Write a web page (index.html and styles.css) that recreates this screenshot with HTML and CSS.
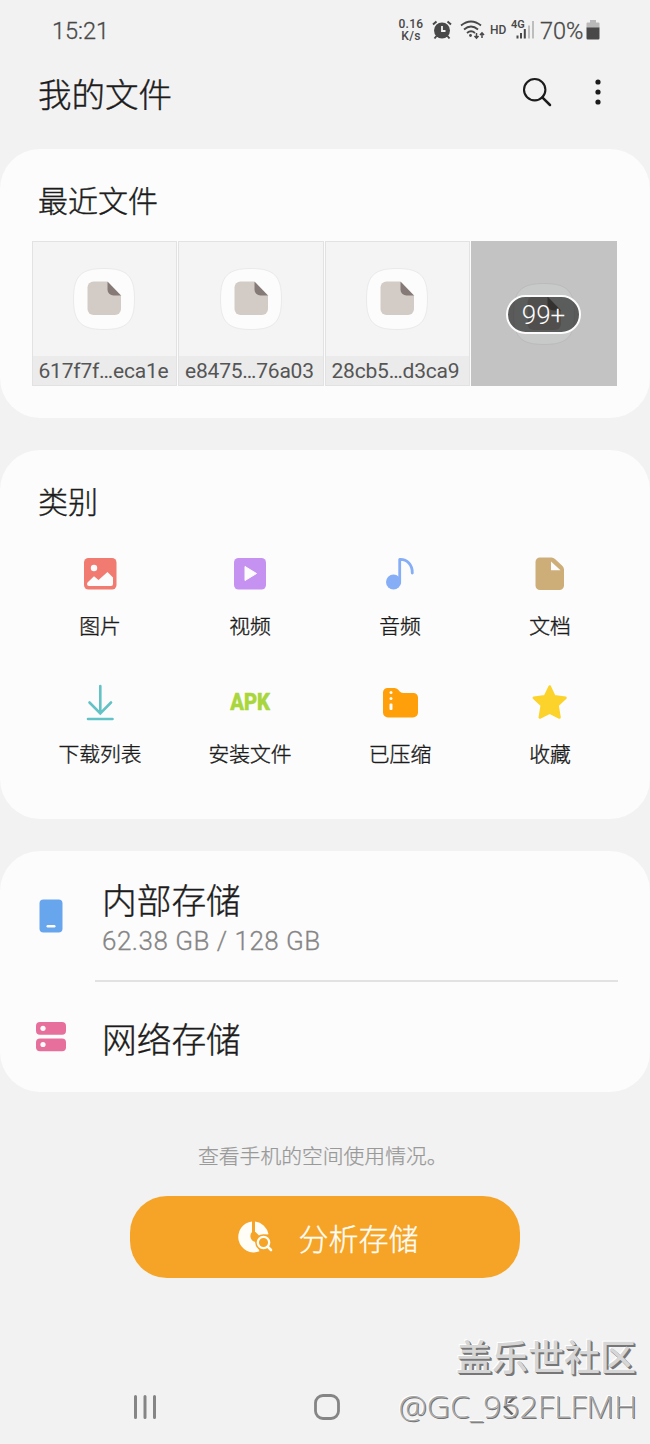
FILE: index.html
```html
<!DOCTYPE html>
<html lang="zh-CN">
<head>
<meta charset="utf-8">
<title>我的文件</title>
<link rel="stylesheet" href="styles.css">
</head>
<body>
<svg class="defs" width="0" height="0">
  <defs>
    <symbol id="sheet" viewBox="0 0 64 64">
      <path d="M21.500 14.500H35L49 28.500V42a6 6 0 0 1-6 6H21.500a6 6 0 0 1-6-6V20.500a6 6 0 0 1 6-6Z" fill="#d3ccc6"/>
      <path d="M35.500 14.500L49 28.500H41.500a6 6 0 0 1-6-6Z" fill="#857a76"/>
    </symbol>
    <symbol id="file" viewBox="0 0 64 64">
      <path d="M32 1.500C55 1.500 62.500 9 62.500 32S55 62.500 32 62.500 1.500 55 1.500 32 9 1.500 32 1.500Z" fill="#fcfcfc" stroke="#eaeaea"/>
      <use href="#sheet" width="64" height="64"/>
    </symbol>
  </defs>
</svg>
<div class="phone">
  <header class="status">
    <span class="clock">15:21</span>
    <div class="indicators">
      <span class="speed">0.16<br>K/s</span>
      <svg class="alarm" width="20" height="20" viewBox="0 0 20 20"><circle cx="10" cy="10.500" r="8" fill="#484848"/><path d="M1 4.500L4.500 1.500M19 4.500L15.500 1.500M4.500 16L2.500 18.500M15.500 16L17.500 18.500" stroke="#484848" stroke-width="2"/><path d="M10 6V11H13.500" fill="none" stroke="#f2f2f2" stroke-width="1.800"/></svg>
      <svg class="wifi" width="25" height="20" viewBox="0 0 25 20" fill="none" stroke="#484848" stroke-width="1.800"><path d="M1 5.500Q11 -2.500 21 5.500M4 9.500Q11 3.500 18 9.500M7 13Q11 9.500 15 13"/><circle cx="10.500" cy="15.500" r="1.400" fill="#484848" stroke="none"/><path d="M16.500 13V18M14.500 16L16.500 18.200 18.500 16M22 18V13M20 15L22 12.800 24 15" stroke-width="1.500"/></svg>
      <span class="hd">HD</span>
      <span class="cell"><svg width="22" height="20" viewBox="0 0 22 20"><path d="M5.500 15.500V18.500M9 13V18.500M12.800 9V18.500" stroke="#484848" stroke-width="2"/><path d="M17 5.500V18.500M21 1V18.500" stroke="#bdbdbd" stroke-width="2"/></svg><b>4G</b></span>
      <span class="percent">70%</span>
      <svg class="battery" width="14" height="20" viewBox="0 0 14 20"><path d="M4 0H10V2.500H12.500a1 1 0 0 1 1 1V8H.5V3.500a1 1 0 0 1 1-1H4Z" fill="#b9b9b9"/><path d="M.5 7.500H13.500V18.300a1.200 1.200 0 0 1-1.200 1.200H1.700A1.200 1.200 0 0 1 .5 18.300Z" fill="#484848"/></svg>
    </div>
  </header>
  <div class="titlebar">
    <h1>我的文件</h1>
    <div class="actions">
      <svg width="30" height="30" viewBox="0 0 30 30" fill="none" stroke="#1c1c1c" stroke-width="2.100"><circle cx="12.700" cy="12.700" r="10.700"/><path d="M20.300 20.300L28 28" stroke-width="2.500" stroke-linecap="round"/></svg>
      <svg width="6" height="26" viewBox="0 0 6 26" fill="#1c1c1c"><circle cx="3" cy="3" r="2.600"/><circle cx="3" cy="13" r="2.600"/><circle cx="3" cy="23" r="2.600"/></svg>
    </div>
  </div>

  <section class="card recent">
    <h2>最近文件</h2>
    <div class="thumbs">
      <div class="thumb"><svg width="64" height="64"><use href="#file"/></svg><span class="name">617f7f…eca1e</span></div>
      <div class="thumb"><svg width="64" height="64"><use href="#file"/></svg><span class="name">e8475…76a03</span></div>
      <div class="thumb"><svg width="64" height="64"><use href="#file"/></svg><span class="name">28cb5…d3ca9</span></div>
      <div class="thumb more"><svg width="64" height="64" viewBox="0 0 64 64"><path d="M32 1.500C55 1.500 62.500 9 62.500 32S55 62.500 32 62.500 1.500 55 1.500 32 9 1.500 32 1.500Z" fill="#c8c9c9" stroke="#bbb"/><path d="M21.500 14.500H35L49 28.500V42a6 6 0 0 1-6 6H21.500a6 6 0 0 1-6-6V20.500a6 6 0 0 1 6-6Z" fill="#a9a39f"/><path d="M35.500 14.500L49 28.500H41.500a6 6 0 0 1-6-6Z" fill="#504844"/></svg><span class="count">99+</span></div>
    </div>
  </section>

  <section class="card categories">
    <h2>类别</h2>
    <div class="grid">
      <div class="cat"><svg width="40" height="40" viewBox="0 0 40 40"><rect x="4" y="4" width="32.500" height="31.500" rx="4.500" fill="#f17b70"/><circle cx="14" cy="14" r="3.200" fill="#fcfcfc"/><path d="M7.500 28.500L14 22.200 18.500 26 27.500 18 33 23.500V30a2 2 0 0 1-2 2H9a2 2 0 0 1-2-2Z" fill="#fcfcfc"/></svg><span>图片</span></div>
      <div class="cat"><svg width="40" height="40" viewBox="0 0 40 40"><rect x="4" y="4" width="32" height="31.500" rx="4.500" fill="#c692f1"/><path d="M15 12.500V26.500L26.500 19.500Z" fill="#fcfcfc" stroke="#fcfcfc" stroke-linejoin="round"/></svg><span>视频</span></div>
      <div class="cat"><svg width="40" height="40" viewBox="0 0 40 40"><circle cx="13.500" cy="28" r="7.500" fill="#86aef6"/><path d="M19.700 29V5.500C27 5 32.500 11 32.300 19" fill="none" stroke="#86aef6" stroke-width="2.800" stroke-linecap="round" stroke-linejoin="round"/></svg><span>音频</span></div>
      <div class="cat"><svg width="40" height="40" viewBox="0 0 40 40"><path d="M10 3.500H21.500Q23.500 3.500 25 5L32.500 12Q34 13.500 34 15.500V31.500a4.500 4.500 0 0 1-4.500 4.500H10a4.500 4.500 0 0 1-4.500-4.500V8A4.500 4.500 0 0 1 10 3.500Z" fill="#ceae78"/><path d="M21 7.500V16.300H30.500Z" fill="#fcfcfc"/></svg><span>文档</span></div>
      <div class="cat"><svg width="40" height="40" viewBox="0 0 40 40" fill="none" stroke="#62c2c6" stroke-width="2.600" stroke-linecap="round"><path d="M20.300 4V31M9.500 20.500L20.300 31.500 31 20.500M8 37H32.500"/></svg><span>下载列表</span></div>
      <div class="cat"><b class="apk">APK</b><span>安装文件</span></div>
      <div class="cat"><svg width="40" height="40" viewBox="0 0 40 40"><path d="M7.500 6H14.500Q16.500 6 18 7.500L20 9.700Q21.500 11 23.500 11H33.500a4.500 4.500 0 0 1 4.500 4.500V30.500a5 5 0 0 1-5 5H8a5 5 0 0 1-5-5V10.500A4.500 4.500 0 0 1 7.500 6Z" fill="#ff9f0a"/><circle cx="11" cy="10.500" r="1.500" fill="#fcfcfc"/><circle cx="11" cy="16.500" r="1.500" fill="#fcfcfc"/><rect x="9.500" y="21.500" width="3" height="6.500" rx="1" fill="#fcfcfc"/></svg><span>已压缩</span></div>
      <div class="cat"><svg width="40" height="40" viewBox="0 0 40 40"><path d="M19.700 4.500L24.300 14.300 35.500 15.800 27.500 23.200 29.500 35.500 19.700 30.500 9.800 35.500 11.800 23.200 3.800 15.800 15 14.300Z" fill="#fbd32b" stroke="#fbd32b" stroke-width="2.600" stroke-linejoin="round"/></svg><span>收藏</span></div>
    </div>
  </section>

  <section class="card storage">
    <div class="row internal">
      <svg width="34" height="34" viewBox="0 0 34 34"><rect x="5.500" y=".5" width="23" height="33" rx="4" fill="#67a5ed"/><rect x="12.500" y="26" width="9" height="2.500" rx="1.200" fill="#fcfcfc"/></svg>
      <div class="detail"><h3>内部存储</h3><p>62.38 GB / 128 GB</p></div>
    </div>
    <div class="row network">
      <svg width="34" height="34" viewBox="0 0 34 34"><rect x="2" y="2" width="30" height="12.700" rx="4" fill="#e6709b"/><rect x="2" y="18.500" width="30" height="12.700" rx="4" fill="#e6709b"/><circle cx="9" cy="8.300" r="2.600" fill="#fcfcfc"/><circle cx="9" cy="24.500" r="2.600" fill="#fcfcfc"/></svg>
      <h3>网络存储</h3>
    </div>
  </section>

  <p class="hint">查看手机的空间使用情况。</p>
  <button class="analyze">
    <svg width="36" height="34" viewBox="0 0 36 34"><path d="M15 1.500A15.500 15.500 0 1 0 22.500 31.300L18.500 22A6 6 0 0 1 15 12Z" fill="#fffdf5"/><path d="M18 1.500A15.500 15.500 0 0 1 31.500 14.300L22 15.500 18 11.500Z" fill="#fffdf5"/><circle cx="26.500" cy="22.500" r="8.300" fill="#f5a427"/><circle cx="26.500" cy="22.500" r="5.700" fill="none" stroke="#fffdf5" stroke-width="2.300"/><path d="M30.700 26.700L34 30" stroke="#fffdf5" stroke-width="2.600" stroke-linecap="round"/></svg>
    <span>分析存储</span>
  </button>

  <nav class="navbar">
    <svg width="24" height="26" viewBox="0 0 24 26" stroke="#858585" stroke-width="3" stroke-linecap="round"><path d="M2.500 2.500V23.500M12 2.500V23.500M21.500 2.500V23.500"/></svg>
    <svg class="home" width="26" height="26" viewBox="0 0 26 26"><rect x="1.500" y="1.500" width="23" height="23" rx="7.500" fill="none" stroke="#858585" stroke-width="2.800"/></svg>
    <svg width="14" height="26" viewBox="0 0 14 26" fill="none" stroke="#666" stroke-width="2.600" stroke-linecap="round"><path d="M12 3L2 13 12 23"/></svg>
  </nav>
  <div class="watermark"><div class="brand">盖乐世社区</div><div class="user">@GC_952FLFMH</div></div>
</div>
</body>
</html>
```
FILE: styles.css
```css
* { box-sizing: border-box; }
body { margin: 0; background: #f2f2f2; color: #1c1c1c; font-family: "Noto Sans CJK SC", sans-serif; font-weight: 300; }
h1, h2, h3, p { margin: 0; font-weight: 300; }
h1, h2, h3, .cat span { -webkit-text-stroke: .4px #1c1c1c; }
svg { display: block; flex: none; }
.defs { position: absolute; }
.phone { position: relative; width: 650px; height: 1444px; overflow: hidden; display: flex; flex-direction: column; }

.status { height: 60px; padding: 0 50px 0 52px; display: flex; align-items: center; justify-content: space-between; font-family: Roboto, sans-serif; font-weight: 400; color: #484848; }
.clock { font-size: 23.5px; font-weight: 300; -webkit-text-stroke: .3px #484848; padding-top: 1px; }
.indicators { display: flex; align-items: center; }
.speed { width: 26px; font-size: 12px; line-height: 11.500px; letter-spacing: .3px; text-align: center; font-weight: 500; padding-top: 1px; }
.alarm { margin-left: 8px; }
.wifi { margin-left: 8px; }
.hd { margin-left: 5px; width: 18px; font-size: 12px; font-weight: 500; }
.cell { position: relative; margin-left: 4px; }
.cell b { position: absolute; left: -1px; top: -1px; font-size: 11px; line-height: 12px; font-weight: 600; }
.percent { margin-left: 6px; width: 44px; font-size: 23.500px; font-weight: 300; -webkit-text-stroke: .3px #484848; padding-top: 1px; }
.battery { margin-left: 2px; }

.titlebar { height: 89px; padding: 0 49px 0 38px; display: flex; align-items: flex-start; justify-content: space-between; }
h1 { font-size: 33.500px; line-height: 65px; }
.actions { display: flex; align-items: center; gap: 43px; height: 64px; }

.card { width: 650px; border-radius: 40px; background: #fcfcfc; flex: none; }
h2 { font-size: 30px; line-height: 44px; padding-left: 38px; }
.recent { height: 269px; padding-top: 28px; }
.thumbs { display: grid; grid-template-columns: repeat(4, 145.500px); gap: 1px; margin: 20px 0 0 31.500px; }
.thumb { height: 145px; background: #f4f4f4; border: 1px solid #e2e2e2; display: flex; flex-direction: column; align-items: center; justify-content: space-between; padding-top: 25px; }
.name { width: 100%; height: 29px; padding-left: 6px; background: #ebebeb; color: #555; font: 400 21px/31px Roboto, sans-serif; letter-spacing: -.2px; white-space: nowrap; }
.more { position: relative; background: #c3c3c3; border-color: #c3c3c3; padding-top: 40px; }
.count { position: absolute; left: 34px; top: 52.500px; width: 75px; height: 39px; border: 2px solid #fcfcfc; border-radius: 20px; background: rgba(40, 40, 40, .68); color: #fcfcfc; font: 300 26px/37px Roboto, sans-serif; text-align: center; }

.categories { height: 369px; margin-top: 32px; padding-top: 28px; }
.grid { display: grid; grid-template-columns: repeat(4, 150px); grid-auto-rows: 128px; margin: 32px 0 0 25px; }
.cat { display: flex; flex-direction: column; align-items: center; font-size: 20.800px; line-height: 30px; }
.cat span { margin-top: 16px; }
.apk { height: 40px; font: 800 23.500px/41px Roboto, sans-serif; color: #a8d63c; transform: scaleX(.86); -webkit-text-stroke: .6px #a8d63c; }

.storage { height: 241px; margin-top: 32px; padding: 0 32px 0 34px; }
.row { display: flex; align-items: center; gap: 34px; }
h3 { font-size: 34.700px; line-height: 46px; }
.internal { height: 130px; position: relative; }
.internal::after { content: ""; position: absolute; left: 61px; right: 0; bottom: -1px; height: 2px; background: #e2e2e2; }
.internal .detail { padding-top: 5px; }
.internal p { font: 300 26px/39px Roboto, sans-serif; letter-spacing: .5px; color: #858585; -webkit-text-stroke: .3px #858585; }
.network { height: 111px; }
.network h3 { padding-top: 2px; }

.hint { margin-top: 47px; height: 32px; padding-left: 198px; font-size: 20.800px; line-height: 33px; color: #999; white-space: nowrap; -webkit-text-stroke: .25px #999; }
.analyze { width: 390px; height: 82px; margin: 25px 0 0 130px; padding: 0 0 0 5px; border: 0; border-radius: 37px; background: #f5a427; color: #fffdf5; font: 300 30px/44px "Noto Sans CJK SC", sans-serif; -webkit-text-stroke: .35px #fffdf5; display: flex; align-items: center; justify-content: center; gap: 26px; flex: none; }

.navbar { display: flex; align-items: center; justify-content: space-between; width: 384px; margin: 116px 0 0 133px; }
.home { margin-right: 6px; }
.watermark { position: absolute; right: 14px; top: 1330px; color: #d6d6d6; text-align: right; white-space: nowrap; text-shadow: 1px 1px 0 #777, 2px 2px 0 #777, -1px -1px 0 #fff; }
.brand { font-size: 36px; line-height: 50px; font-weight: 500; }
.user { margin-right: -1px; font: 300 32px/51px "Open Sans", sans-serif; color: #a8a8a8; text-shadow: 1px 1px 0 #747474, -1px -1px 0 #fff; }
```
